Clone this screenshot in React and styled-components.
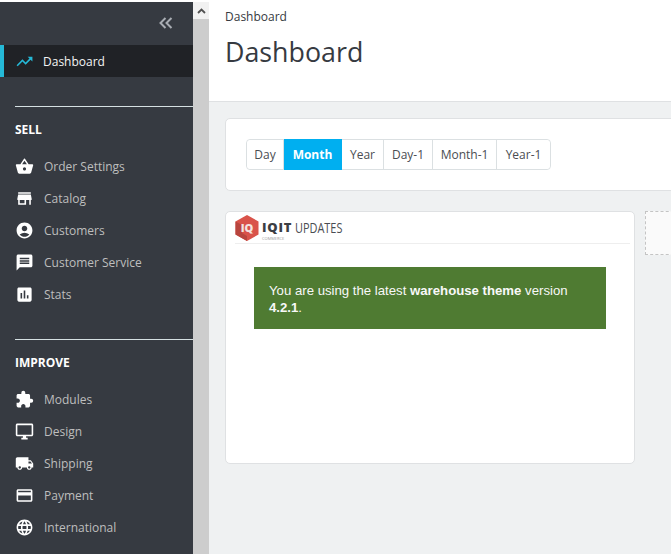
import React from "react";
import styled, { createGlobalStyle } from "styled-components";
import {
  MdTrendingUp, MdShoppingBasket, MdStore, MdAccountCircle, MdMessage, MdAssessment,
  MdExtension, MdOutlineDesktopWindows, MdLocalShipping, MdCreditCard, MdLanguage,
} from "react-icons/md";

const GlobalStyle = createGlobalStyle`
  html, body {
    margin: 0;
    padding: 0;
    background: #fff;
    overflow: hidden;
  }
  * { box-sizing: border-box; }
`;

const Page = styled.div`
  display: flex;
  width: 671px;
  height: 554px;
  padding-top: 2px;
  font-family: "Open Sans", "Liberation Sans", sans-serif;
  overflow: hidden;
`;

const Sidebar = styled.nav`
  flex: 0 0 193px;
  background: #363a41;
  color: #bebebe;
`;

const Collapse = styled.div`
  height: 43px;
  display: flex;
  align-items: center;
  justify-content: flex-end;
  padding: 0 20px 1px 0;
  color: #a9adb3;
`;

const ActiveItem = styled.div`
  height: 32px;
  display: flex;
  align-items: center;
  gap: 9px;
  padding-left: 11px;
  background: #202226;
  border-left: 4px solid #25b9d7;
  color: #f4f4f4;
  font-size: 12px;
  svg { color: #25b9d7; }
`;

const Section = styled.section`
  margin-top: ${(p) => p.$top}px;
  margin-left: 15px;
  border-top: 1px solid #d5e0e2;
`;

const SectionTitle = styled.h3`
  margin: 14px 0 11px;
  height: 18px;
  line-height: 18px;
  color: #fff;
  font-size: 12px;
  font-weight: 700;
`;

const MenuItem = styled.div`
  height: 32px;
  display: flex;
  align-items: center;
  gap: 10px;
  font-size: 12px;
  svg { color: #fff; flex: none; }
`;

const Scrollbar = styled.div`
  flex: 0 0 16px;
  background: #cdcdcd;
`;

const ScrollButton = styled.div`
  height: 17px;
  background: #f1f1f1;
  display: flex;
  align-items: center;
  justify-content: center;
`;

const Main = styled.main`
  flex: 1;
  min-width: 0;
  background: #eff1f2;
  overflow: hidden;
`;

const Header = styled.header`
  height: 100px;
  padding: 7px 16px 0;
  background: #fff;
  border-bottom: 1px solid #dfe1e3;
`;

const Crumb = styled.div`
  font-size: 12px;
  line-height: 16px;
  color: #363a41;
`;

const Title = styled.h1`
  margin: 8px 0 0;
  font-size: 26.8px;
  line-height: 38px;
  font-weight: 400;
  color: #363a41;
`;

const Content = styled.div`
  padding: 16px 0 0 16px;
`;

const Card = styled.div`
  width: 560px;
  height: 73px;
  padding: 20px;
  background: #fff;
  border: 1px solid #dfe1e3;
  border-radius: 5px;
`;

const RangeGroup = styled.div`
  display: inline-flex;
  height: 31px;
  border: 1px solid #dbe0e2;
  border-radius: 4px;
`;

const RangeButton = styled.div`
  display: flex;
  align-items: center;
  justify-content: center;
  width: ${(p) => p.$width}px;
  font-size: 12px;
  margin: ${(p) => (p.$active ? "-1px 0" : "0")};
  font-weight: ${(p) => (p.$active ? 700 : 400)};
  color: ${(p) => (p.$active ? "#fff" : "#4a4d52")};
  background: ${(p) => (p.$active ? "#00aff0" : "#fff")};
  border-right: 1px solid ${(p) => (p.$active ? "#00aff0" : "#dbe0e2")};
  &:first-child { border-radius: 4px 0 0 4px; }
  &:last-child { border-right: 0; border-radius: 0 4px 4px 0; }
`;

const Widgets = styled.div`
  display: flex;
  align-items: flex-start;
  gap: 10px;
  margin-top: 20px;
`;

const UpdatesCard = styled.div`
  flex: 0 0 410px;
  height: 253px;
  background: #fff;
  border: 1px solid #dfe1e3;
  border-radius: 5px;
  padding: 0 0 0 9px;
`;

const UpdatesHead = styled.div`
  display: flex;
  align-items: center;
  gap: 3px;
  height: 32px;
  margin-right: 4px;
  border-bottom: 1px solid #eeeeee;
`;

const Brand = styled.div`
  display: flex;
  flex-direction: column;
  width: 30px;
  padding-top: 6px;
  color: #3b3e43;
`;

const BrandName = styled.span`
  font-size: 13px;
  font-weight: 800;
  letter-spacing: 0.8px;
  line-height: 13px;
`;

const BrandSub = styled.span`
  margin-top: 2px;
  font-size: 4px;
  line-height: 5px;
  color: #9a9a9a;
`;

const UpdatesLabel = styled.span`
  font-size: 14px;
  color: #4a4d52;
  transform: scaleX(0.78);
  transform-origin: left center;
`;

const Notice = styled.div`
  width: 352px;
  height: 62px;
  margin: 23px 0 0 19px;
  padding: 15px;
  background: #4f7b32;
  color: #f8f8f8;
  font-family: "Liberation Sans", Arial, sans-serif;
  font-size: 13.2px;
  line-height: 17px;
`;

const Placeholder = styled.div`
  flex: 0 0 60px;
  height: 44px;
  background: #fafafa;
  border: 1px dashed #c4c4c4;
`;

const sell = [
  [MdShoppingBasket, "Order Settings"],
  [MdStore, "Catalog"],
  [MdAccountCircle, "Customers"],
  [MdMessage, "Customer Service"],
  [MdAssessment, "Stats"],
];

const improve = [
  [MdExtension, "Modules"],
  [MdOutlineDesktopWindows, "Design"],
  [MdLocalShipping, "Shipping"],
  [MdCreditCard, "Payment"],
  [MdLanguage, "International"],
];

const ranges = [
  ["Day", 37],
  ["Month", 58, true],
  ["Year", 42],
  ["Day-1", 49],
  ["Month-1", 64],
  ["Year-1", 53],
];

const Menu = ({ items }) =>
  items.map(([Icon, label]) => (
    <MenuItem key={label}>
      <Icon size={19} />
      {label}
    </MenuItem>
  ));

const App = () => {
  return (
    <Page>
      <GlobalStyle />
      <Sidebar>
        <Collapse>
          <svg width="14" height="12" viewBox="0 0 14 12" fill="none" stroke="currentColor" strokeWidth="2">
            <path d="M6.5 1 1.5 6l5 5M12.5 1l-5 5 5 5" />
          </svg>
        </Collapse>
        <ActiveItem>
          <MdTrendingUp size={19} />
          Dashboard
        </ActiveItem>
        <Section $top={29}>
          <SectionTitle>SELL</SectionTitle>
          <Menu items={sell} />
        </Section>
        <Section $top={29}>
          <SectionTitle>IMPROVE</SectionTitle>
          <Menu items={improve} />
        </Section>
      </Sidebar>
      <Scrollbar>
        <ScrollButton>
          <svg width="9" height="6" viewBox="0 0 9 6" fill="none" stroke="#505050" strokeWidth="1.8">
            <path d="M1 5 4.5 1.5 8 5" />
          </svg>
        </ScrollButton>
      </Scrollbar>
      <Main>
        <Header>
          <Crumb>Dashboard</Crumb>
          <Title>Dashboard</Title>
        </Header>
        <Content>
          <Card>
            <RangeGroup>
              {ranges.map(([label, width, active]) => (
                <RangeButton key={label} $width={width} $active={active}>{label}</RangeButton>
              ))}
            </RangeGroup>
          </Card>
          <Widgets>
            <UpdatesCard>
              <UpdatesHead>
                <svg width="24" height="26" viewBox="0 0 24 26">
                  <path d="M12 0 23.5 6.5v13L12 26 .5 19.5v-13z" fill="#d9534a" />
                  <path d="M12 26 .5 19.5v-13L7 10v8l5 3z" fill="#b8453e" />
                  <text x="12" y="17" textAnchor="middle" fontSize="11" fontWeight="800" fill="#f4e4e0" fontFamily="Open Sans">IQ</text>
                </svg>
                <Brand>
                  <BrandName>IQIT</BrandName>
                  <BrandSub>COMMERCE</BrandSub>
                </Brand>
                <UpdatesLabel>UPDATES</UpdatesLabel>
              </UpdatesHead>
              <Notice>
                You are using the latest <b>warehouse theme</b> version <b>4.2.1</b>.
              </Notice>
            </UpdatesCard>
            <Placeholder />
          </Widgets>
        </Content>
      </Main>
    </Page>
  );
};

export default App;
